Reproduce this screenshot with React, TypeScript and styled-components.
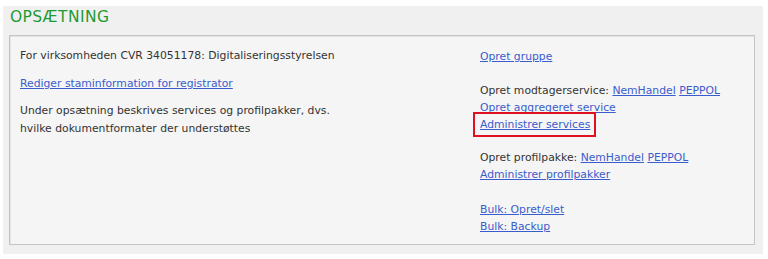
import styled, { createGlobalStyle } from 'styled-components';

const Global = createGlobalStyle`
  html, body {
    margin: 0;
    padding: 0;
    background: #ffffff;
  }
  body {
    font-family: "DejaVu Sans", Verdana, sans-serif;
  }
`;

const Panel = styled.div`
  margin: 6px 0 0 3px;
  width: 760px;
  height: 248px;
  background: #f0f0f0;
  box-sizing: border-box;
  padding: 0 8px 0 6px;
  display: flex;
  flex-direction: column;
`;

const Title = styled.h1`
  margin: 0;
  padding: 2px 0 0 1px;
  height: 29px;
  box-sizing: border-box;
  font-size: 15.5px;
  font-weight: normal;
  color: #1f9a33;
  letter-spacing: 0.4px;
`;

const Box = styled.div`
  height: 210px;
  box-sizing: border-box;
  border: 1px solid #c4c4c4;
  box-shadow: inset 1px 1px 0 #e2e2e2;
  background: #f5f5f5;
  display: flex;
  padding: 11px 10px 0 10px;
  font-size: 10.8px;
  color: #333333;
`;

const LeftCol = styled.div`
  width: 460px;
  display: flex;
  flex-direction: column;
  line-height: 18px;
`;

const RightCol = styled.div`
  display: flex;
  flex-direction: column;
  line-height: 17px;
  padding-top: 1px;
`;

const Para = styled.p<{ $gap?: number }>`
  margin: 0 0 ${(p) => p.$gap ?? 9}px 0;
`;

const Link = styled.a`
  color: #3a5ccc;
  text-decoration: underline;
  cursor: pointer;
`;

const Group = styled.div<{ $gap?: number }>`
  margin-bottom: ${(p) => p.$gap ?? 18}px;
  display: flex;
  flex-direction: column;
`;

const Highlight = styled.span`
  align-self: flex-start;
  position: relative;

  &::after {
    content: '';
    position: absolute;
    top: -4px;
    bottom: -4px;
    left: -7px;
    right: -6px;
    border: 2px solid #e01020;
    pointer-events: none;
  }
`;

export default function App() {
  return (
    <>
      <Global />
      <Panel>
        <Title>OPSÆTNING</Title>
        <Box>
          <LeftCol>
            <Para $gap={10}>For virksomheden CVR 34051178: Digitaliseringsstyrelsen</Para>
            <Para $gap={9}>
              <Link>Rediger staminformation for registrator</Link>
            </Para>
            <Para>
              Under opsætning beskrives services og profilpakker, dvs.
              <br />
              hvilke dokumentformater der understøttes
            </Para>
          </LeftCol>
          <RightCol>
            <Group $gap={17}>
              <Link>Opret gruppe</Link>
            </Group>
            <Group $gap={16}>
              <span>
                Opret modtagerservice: <Link>NemHandel</Link> <Link>PEPPOL</Link>
              </span>
              <Link>Opret aggregeret service</Link>
              <Highlight>
                <Link>Administrer services</Link>
              </Highlight>
            </Group>
            <Group>
              <span>
                Opret profilpakke: <Link>NemHandel</Link> <Link>PEPPOL</Link>
              </span>
              <Link>Administrer profilpakker</Link>
            </Group>
            <Group>
              <Link>Bulk: Opret/slet</Link>
              <Link>Bulk: Backup</Link>
            </Group>
          </RightCol>
        </Box>
      </Panel>
    </>
  );
}
